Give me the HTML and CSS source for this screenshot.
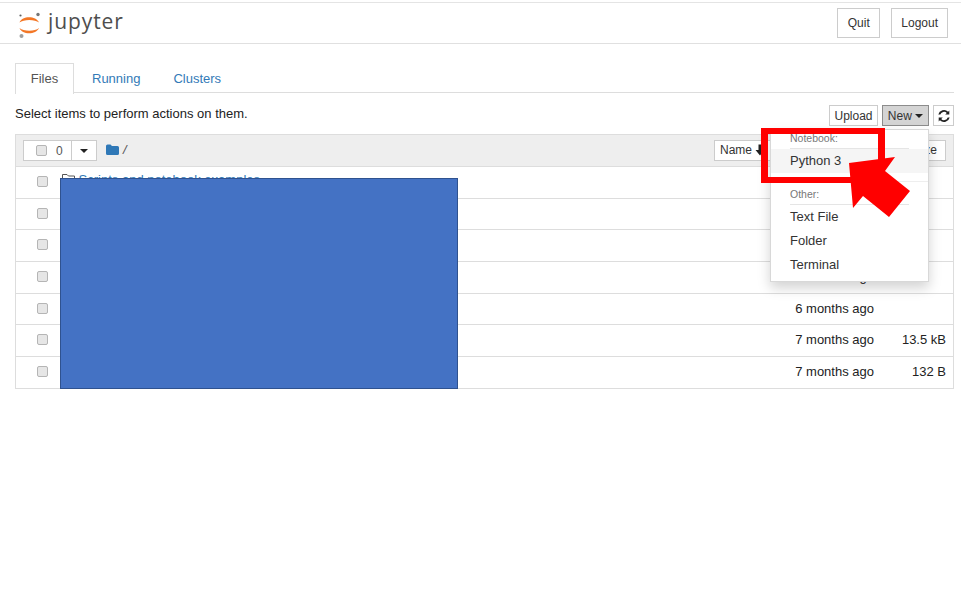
FILE: index.html
```html
<!DOCTYPE html>
<html lang="en">
<head>
  <meta charset="UTF-8" />
  <title>Jupyter - Files</title>
  <link rel="stylesheet" href="styles.css">
</head>
<body>
  <header>
    <div class="logo">
      <svg class="logo-mark" width="26" height="30" viewBox="0 0 26 30">
        <path d="M2.5 13.5 C5 6.500 19 6.500 22 13.5 C18 10 6.500 10 2.500 13.500Z" fill="#f37726"/>
        <path d="M2.500 19 C6.500 22.500 18 22.500 22 19 C19 26 5 26 2.500 19Z" fill="#f37726"/>
        <circle cx="21" cy="5.500" r="1.700" fill="#767677"/>
        <circle cx="3.500" cy="6.500" r="1.100" fill="#616262"/>
        <circle cx="4.500" cy="27" r="2" fill="#9e9e9e"/>
      </svg>
      <span class="logo-text">jupyter</span>
    </div>
    <div class="header-buttons">
      <button class="btn btn-large">Quit</button>
      <button class="btn btn-large">Logout</button>
    </div>
  </header>

  <div class="content">
    <ul class="tabs">
      <li class="tab active">Files</li>
      <li class="tab">Running</li>
      <li class="tab">Clusters</li>
    </ul>

    <div class="toolbar">
      <span>Select items to perform actions on them.</span>
      <div class="toolbar-buttons">
        <button class="btn">Upload</button>
        <button class="btn btn-pressed">New <span class="caret"></span></button>
        <button class="btn btn-icon">
          <svg width="14" height="14" viewBox="0 0 14 14">
            <path d="M12.300 1.500 V5.600 H8.200 L9.800 4 A3.900 3.900 0 0 0 3.300 5.600 H1.300 A5.900 5.900 0 0 1 11.100 2.700Z" fill="#222"/>
            <path d="M1.700 12.500 V8.400 H5.800 L4.200 10 A3.900 3.900 0 0 0 10.700 8.400 H12.700 A5.900 5.900 0 0 1 2.900 11.300Z" fill="#222"/>
          </svg>
        </button>
      </div>
    </div>

    <div class="file-list">
      <div class="list-header">
        <div class="select-group">
          <span class="select-count"><span class="checkbox"></span><span>0</span></span>
          <span class="select-caret"><span class="caret"></span></span>
        </div>
        <svg class="folder" width="13" height="11" viewBox="0 0 13 11">
          <path d="M0 2 Q0 0.500 1.500 0.500 H4.500 L6 2 H11.500 Q13 2 13 3.500 V9.500 Q13 11 11.500 11 H1.500 Q0 11 0 9.500Z" fill="#2f78b7"/>
        </svg>
        <span class="crumb">/</span>
        <div class="sort-buttons">
          <span class="sort-btn">Name
            <svg class="sort-arrow" width="10" height="12" viewBox="0 0 10 12">
              <path d="M3.500 0.500 H6.500 V6 H9.500 L5 11.500 L0.500 6 H3.500Z" fill="#222"/>
            </svg>
          </span>
          <span class="sort-btn sort-size">File size</span>
        </div>
      </div>
      <div class="row">
        <span class="checkbox"></span>
        <span class="name">
          <svg width="13" height="11" viewBox="0 0 13 11"><path d="M0.500 1.500 H5 L6.500 3 H12.500 V10.500 H0.500Z" fill="none" stroke="#555"/></svg>
          Scripts and notebook examples
        </span>
        <span class="modified">2 months ago</span><span class="size"></span>
      </div>
      <div class="row"><span class="checkbox"></span><span class="name"></span><span class="modified">3 months ago</span><span class="size"></span></div>
      <div class="row"><span class="checkbox"></span><span class="name"></span><span class="modified">5 months ago</span><span class="size"></span></div>
      <div class="row"><span class="checkbox"></span><span class="name"></span><span class="modified">6 months ago</span><span class="size"></span></div>
      <div class="row"><span class="checkbox"></span><span class="name"></span><span class="modified">6 months ago</span><span class="size"></span></div>
      <div class="row"><span class="checkbox"></span><span class="name"></span><span class="modified">7 months ago</span><span class="size">13.5 kB</span></div>
      <div class="row"><span class="checkbox"></span><span class="name"></span><span class="modified">7 months ago</span><span class="size">132 B</span></div>
    </div>
  </div>

  <!-- menu and the annotations pasted on top of the screenshot -->
  <div class="new-menu">
    <div class="menu-label">Notebook:</div>
    <div class="menu-divider"></div>
    <div class="menu-item hover">Python 3</div>
    <div class="menu-divider sep"></div>
    <div class="menu-label">Other:</div>
    <div class="menu-divider"></div>
    <div class="menu-item">Text File</div>
    <div class="menu-item">Folder</div>
    <div class="menu-item">Terminal</div>
  </div>
  <div class="redact"></div>
  <div class="red-box"></div>
  <svg class="red-arrow" width="62" height="62" viewBox="0 0 62 62">
    <path d="M0 7 L46 1 L36 15 L61 35 L40 61 L14 40 L4 52Z" fill="#ff0000"/>
  </svg>
</body>
</html>
```

FILE: styles.css
```css
body {
  font-family: 'Liberation Sans', Arial, sans-serif;
  font-size: 13px;
  color: #222;
  background: #fff;
  margin: 0;
  padding-top: 2px;
}

header {
  display: flex;
  justify-content: space-between;
  align-items: center;
  height: 40px;
  border-top: 1px solid #e4e4e4;
  border-bottom: 1px solid #e0e0e0;
  padding: 0 13px 0 17px;
}

.logo {
  display: flex;
  align-items: center;
  gap: 5px;
}

.logo-mark {
  margin-top: 1px;
}

.logo-text {
  font-family: 'Open Sans', sans-serif;
  font-size: 21px;
  letter-spacing: 0.9px;
  color: #4e4e4e;
  line-height: 30px;
  margin-top: -4px;
}

.header-buttons {
  display: flex;
  gap: 11px;
}

.btn {
  font-family: inherit;
  font-size: 12px;
  color: #333;
  background: #fff;
  border: 1px solid #ccc;
  padding: 0;
  height: 21px;
}

.btn-large {
  height: 30px;
  min-width: 43px;
  padding: 0 9px;
}

.btn-pressed {
  background: #d4d4d4;
  border-color: #8c8c8c;
  width: 47px;
}

.btn-icon {
  width: 21px;
  display: flex;
  align-items: center;
  justify-content: center;
}

.caret {
  display: inline-block;
  border-top: 4px solid #222;
  border-left: 4px solid transparent;
  border-right: 4px solid transparent;
  vertical-align: middle;
}

.content {
  padding: 19px 7px 0 15px;
}

.tabs {
  display: flex;
  list-style: none;
  margin: 0;
  padding: 0;
  height: 29px;
  border-bottom: 1px solid #ddd;
}

.tab {
  color: #337ab7;
  padding: 8px 0 0;
  margin-left: 18px;
  margin-right: 15px;
}

.tab.active {
  color: #555;
  background: #fff;
  height: 22px;
  width: 57px;
  margin: 0 0 -1px;
  padding: 7px 0 1px;
  text-align: center;
  border: 1px solid #ddd;
  border-bottom: none;
}

.toolbar {
  display: flex;
  justify-content: space-between;
  align-items: flex-start;
  box-sizing: border-box;
  height: 41px;
  padding-top: 12px;
  line-height: 17px;
}

.toolbar-buttons {
  display: flex;
  gap: 4px;
}

.toolbar-buttons .btn:first-child {
  width: 49px;
}

.file-list {
  border: 1px solid #ddd;
}

.list-header {
  display: flex;
  align-items: center;
  height: 31px;
  padding: 0 7px;
  background: #eee;
  border-bottom: 1px solid #ddd;
}

.select-group {
  display: flex;
  height: 21px;
  background: #fff;
  border: 1px solid #ccc;
  box-sizing: border-box;
  width: 74px;
  font-size: 12px;
  color: #555;
}

.select-count {
  display: flex;
  align-items: center;
  gap: 9px;
  width: 48px;
  padding-left: 12px;
  box-sizing: border-box;
  border-right: 1px solid #ccc;
}

.select-caret {
  display: flex;
  flex: 1;
  align-items: center;
  justify-content: center;
}

.checkbox {
  display: inline-block;
  width: 9px;
  height: 9px;
  flex: none;
  background: #e6e6e6;
  border: 1px solid #b5b5b5;
  border-radius: 2px;
}

.folder {
  margin: -3px 0 0 9px;
}

.crumb {
  margin: -2px 0 0 4px;
  font-style: italic;
  color: #555;
}

.sort-buttons {
  display: flex;
  margin-left: auto;
}

.sort-btn {
  font-size: 12px;
  color: #333;
  background: #fff;
  border: 1px solid #ccc;
  height: 19px;
  line-height: 19px;
  padding-left: 5px;
  width: 91px;
}

.sort-arrow {
  vertical-align: -2px;
}

.sort-size {
  width: 120px;
  text-align: right;
  padding-right: 8px;
  margin-left: -1px;
}

.row {
  display: flex;
  align-items: center;
  height: 28.700px;
  padding: 0 7px 2px 21px;
  border-bottom: 1px solid #ddd;
}

.row:last-child {
  border-bottom: none;
}

.name {
  flex: 1;
  margin-left: 14px;
  color: #337ab7;
  margin-top: -3px;
}

.modified {
  width: 120px;
  text-align: right;
}

.size {
  width: 72px;
  text-align: right;
}

/* things lying over the page */
.new-menu {
  position: absolute;
  left: 770px;
  top: 129px;
  width: 159px;
  height: 153px;
  box-sizing: border-box;
  padding-top: 2px;
  background: #fff;
  border: 1px solid #d8d8d8;
  box-shadow: 0 6px 12px rgba(0, 0, 0, 0.175);
}

.menu-label {
  font-size: 10.500px;
  line-height: 13px;
  color: #777;
  padding-left: 19px;
}

.menu-divider {
  height: 1px;
  background: #e5e5e5;
  margin: 3px 19px 0 19px;
}

.menu-divider.sep {
  margin: 8px 0 6px;
  background: #eee;
}

.menu-item {
  height: 24px;
  line-height: 24px;
  padding-left: 19px;
  color: #333;
}

.menu-item.hover {
  background: #f5f5f5;
}

.redact {
  position: absolute;
  left: 60px;
  top: 178px;
  width: 396px;
  height: 209px;
  background: #4472c4;
  border: 1px solid #2f528f;
}

.red-box {
  position: absolute;
  left: 761px;
  top: 128px;
  width: 110px;
  height: 43px;
  border: 6px solid #ff0000;
  border-width: 6px 7px;
}

.red-arrow {
  position: absolute;
  left: 849px;
  top: 156px;
}
```
